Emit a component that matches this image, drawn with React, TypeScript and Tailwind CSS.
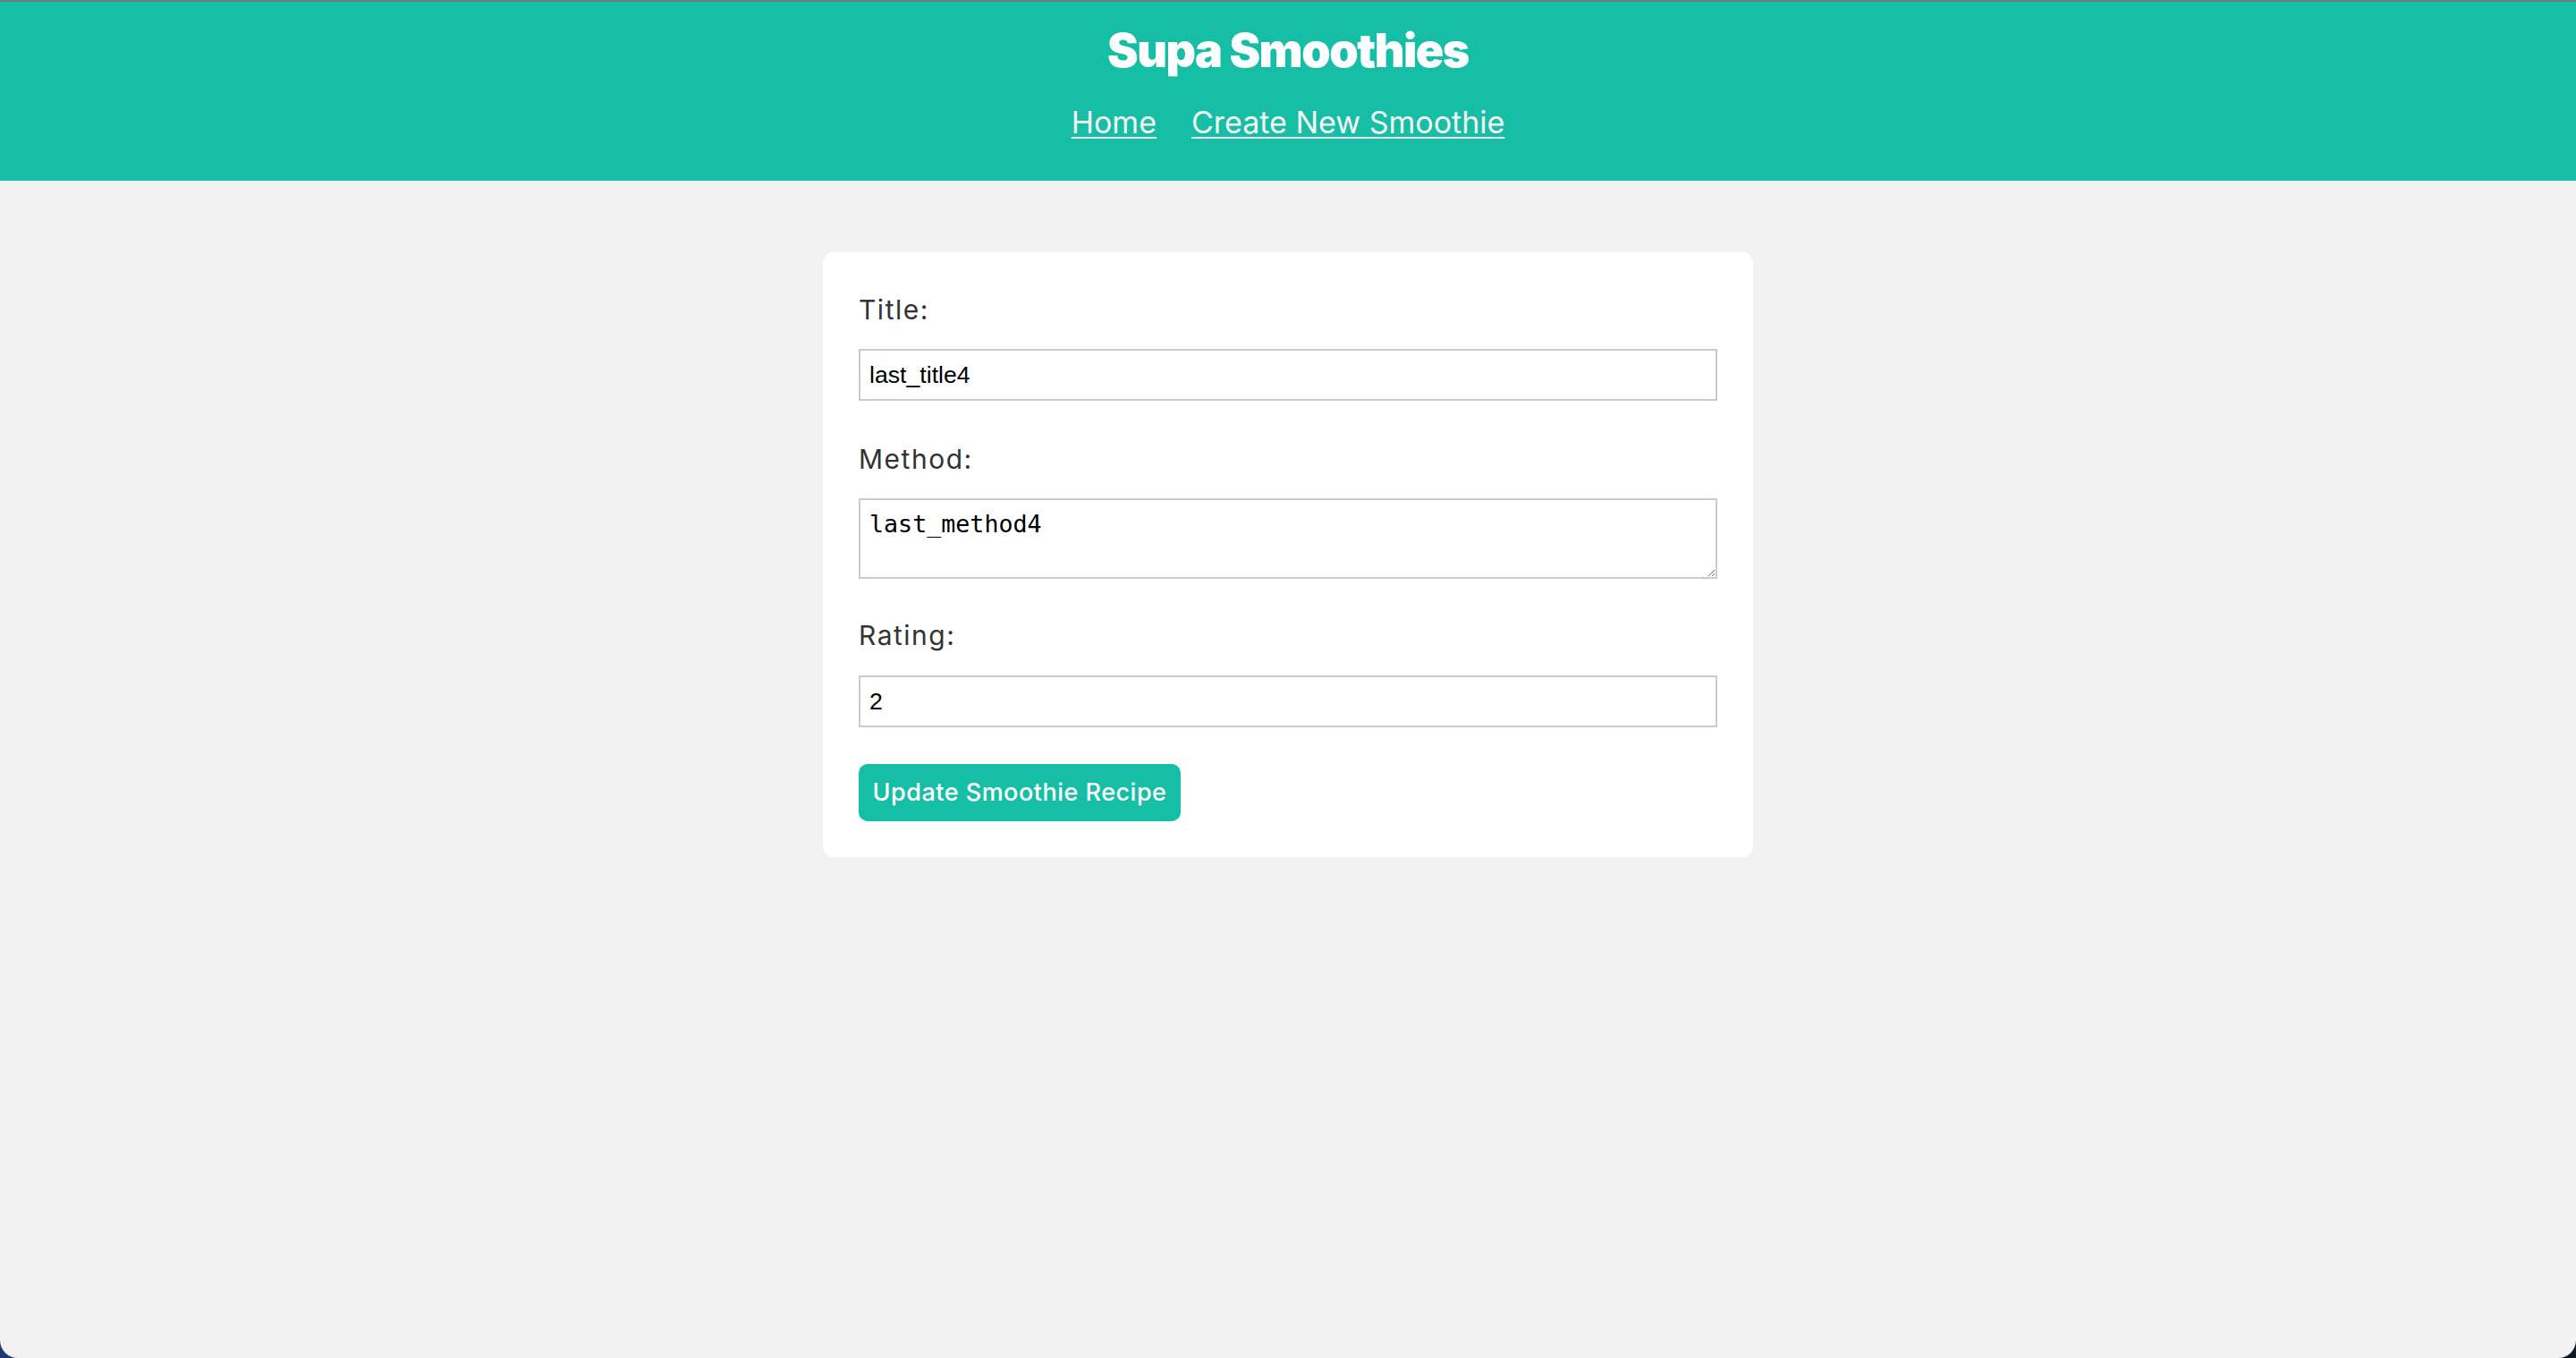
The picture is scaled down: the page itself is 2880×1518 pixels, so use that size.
import React from "react";

export default function App() {
  const sans = { fontFamily: "Inter, 'Noto Sans', sans-serif" };
  return (
    <div className="w-full h-[1518px] bg-gradient-to-r from-[#1e3a70] to-[#121a28]">
      <div className="h-full flex flex-col bg-[#f2f2f2] rounded-b-[20px] overflow-hidden border-t-2 border-[#6b7b80]" style={sans}>
        <header className="h-[200px] shrink-0 bg-[#16bea5] flex flex-col items-center">
          <h1 className="mt-[25px] text-[52px] leading-[60px] font-black text-white tracking-[-1.5px]">
            Supa Smoothies
          </h1>
          <nav className="mt-[30px] flex gap-[39px] text-[34px] leading-[40px] text-[#f4f4f4]">
            <a href="#" className="underline decoration-2 underline-offset-[4px]">Home</a>
            <a href="#" className="underline decoration-2 underline-offset-[4px]">Create New Smoothie</a>
          </nav>
        </header>
        <main className="pt-[80px] flex justify-center">
          <form className="w-[1040px] bg-white rounded-[12px] px-[40px] pt-[44px] pb-[40px] flex flex-col">
            <label className="text-[30px] leading-[40px] text-[#333] tracking-[1.5px]">Title:</label>
            <input
              type="text"
              defaultValue="last_title4"
              className="mt-[24px] h-[58px] border-2 border-[#cccccc] px-[10px] text-[26.67px] text-black outline-none"
              style={{ fontFamily: "'Liberation Sans', Arial, sans-serif" }}
            />
            <label className="mt-[45px] text-[30px] leading-[40px] text-[#333] tracking-[1.5px]">Method:</label>
            <textarea
              defaultValue="last_method4"
              className="mt-[24px] h-[90px] border-2 border-[#cccccc] px-[10px] pt-[11px] text-[26.67px] leading-[31px] text-black outline-none"
              style={{ fontFamily: "'DejaVu Sans Mono', 'Liberation Mono', monospace" }}
            />
            <label className="mt-[43px] text-[30px] leading-[40px] text-[#333] tracking-[1.5px]">Rating:</label>
            <input
              type="number"
              defaultValue="2"
              className="mt-[25px] h-[58px] border-2 border-[#cccccc] px-[10px] text-[26.67px] text-black outline-none"
              style={{ fontFamily: "'Liberation Sans', Arial, sans-serif" }}
            />
            <div className="mt-[41px]">
              <button
                type="button"
                className="w-[360px] h-[64px] rounded-[10px] bg-[#16bea5] text-white text-[27px] leading-[64px] font-medium tracking-[0.5px]"
              >
                Update Smoothie Recipe
              </button>
            </div>
          </form>
        </main>
      </div>
    </div>
  );
}
